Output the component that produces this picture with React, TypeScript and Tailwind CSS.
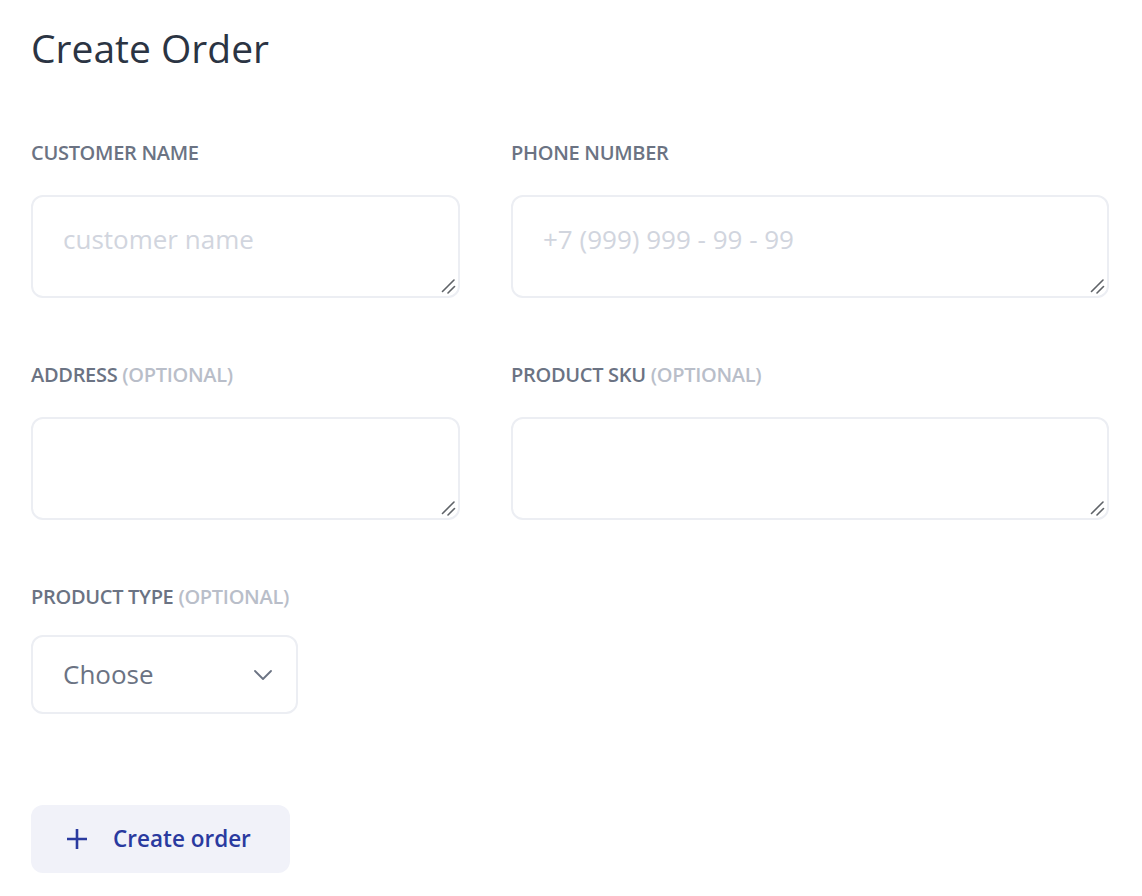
const font = { fontFamily: '"Open Sans", "Noto Sans", sans-serif' }

function Label({ text, optional }: { text: string; optional?: boolean }) {
  return (
    <div className="text-[20px] leading-[24px] font-semibold uppercase text-[#6b7383] tracking-[-0.3px]">
      {text}
      {optional && <span className="text-[#b9bec9]"> (optional)</span>}
    </div>
  )
}

function Grip() {
  return (
    <svg className="pointer-events-none absolute bottom-[4px] right-[4px]" width="16" height="16" viewBox="0 0 16 16">
      <path d="M2.5 13.5 L14 2 M8 15 L14.5 8.5" stroke="#5f6368" strokeWidth="1.6" strokeLinecap="round" />
    </svg>
  )
}

function Area({ placeholder }: { placeholder?: string }) {
  return (
    <div className="relative mt-[30px]">
      <textarea
        placeholder={placeholder}
        className="block h-[103px] w-full resize-none rounded-xl border-2 border-[#eceef3] bg-white px-[30px] py-[22px] text-[26px] leading-[40px] text-[#374151] placeholder:text-[#d1d5de] outline-none"
        style={font}
      />
      <Grip />
    </div>
  )
}

export default function App() {
  return (
    <div className="min-h-screen bg-white pl-[31px] pr-[33px] pt-[24px]" style={font}>
      <h1 className="text-[39px] leading-[48px] font-normal text-[#2b3443]">Create Order</h1>

      <div className="mt-[69px] grid grid-cols-[429px_1fr] gap-x-[51px] gap-y-[65px]">
        <div>
          <Label text="Customer name" />
          <Area placeholder="customer name" />
        </div>
        <div>
          <Label text="Phone number" />
          <Area placeholder="+7 (999) 999 - 99 - 99" />
        </div>
        <div>
          <Label text="Address" optional />
          <Area />
        </div>
        <div>
          <Label text="Product SKU" optional />
          <Area />
        </div>
      </div>

      <div className="mt-[65px]">
        <Label text="Product type" optional />
        <div className="mt-[26px] flex h-[79px] w-[267px] items-center justify-between rounded-xl border-2 border-[#eceef3] pl-[30px] pr-[22px]">
          <span className="text-[26px] text-[#6b7383]">Choose</span>
          <svg width="20" height="12" viewBox="0 0 20 12" className="mr-[1px]">
            <path d="M2 2 L10 10 L18 2" fill="none" stroke="#6b7383" strokeWidth="1.8" strokeLinecap="round" strokeLinejoin="round" />
          </svg>
        </div>
      </div>

      <button className="mt-[91px] flex h-[68px] w-[259px] items-center gap-[25px] rounded-xl bg-[#f1f2f9] pl-[35px] text-[22.5px] font-semibold text-[#2a3a9f]">
        <svg width="22" height="22" viewBox="0 0 22 22">
          <path d="M11 1 V21 M1 11 H21" stroke="#2a3a9f" strokeWidth="2.6" />
        </svg>
        Create order
      </button>
    </div>
  )
}
